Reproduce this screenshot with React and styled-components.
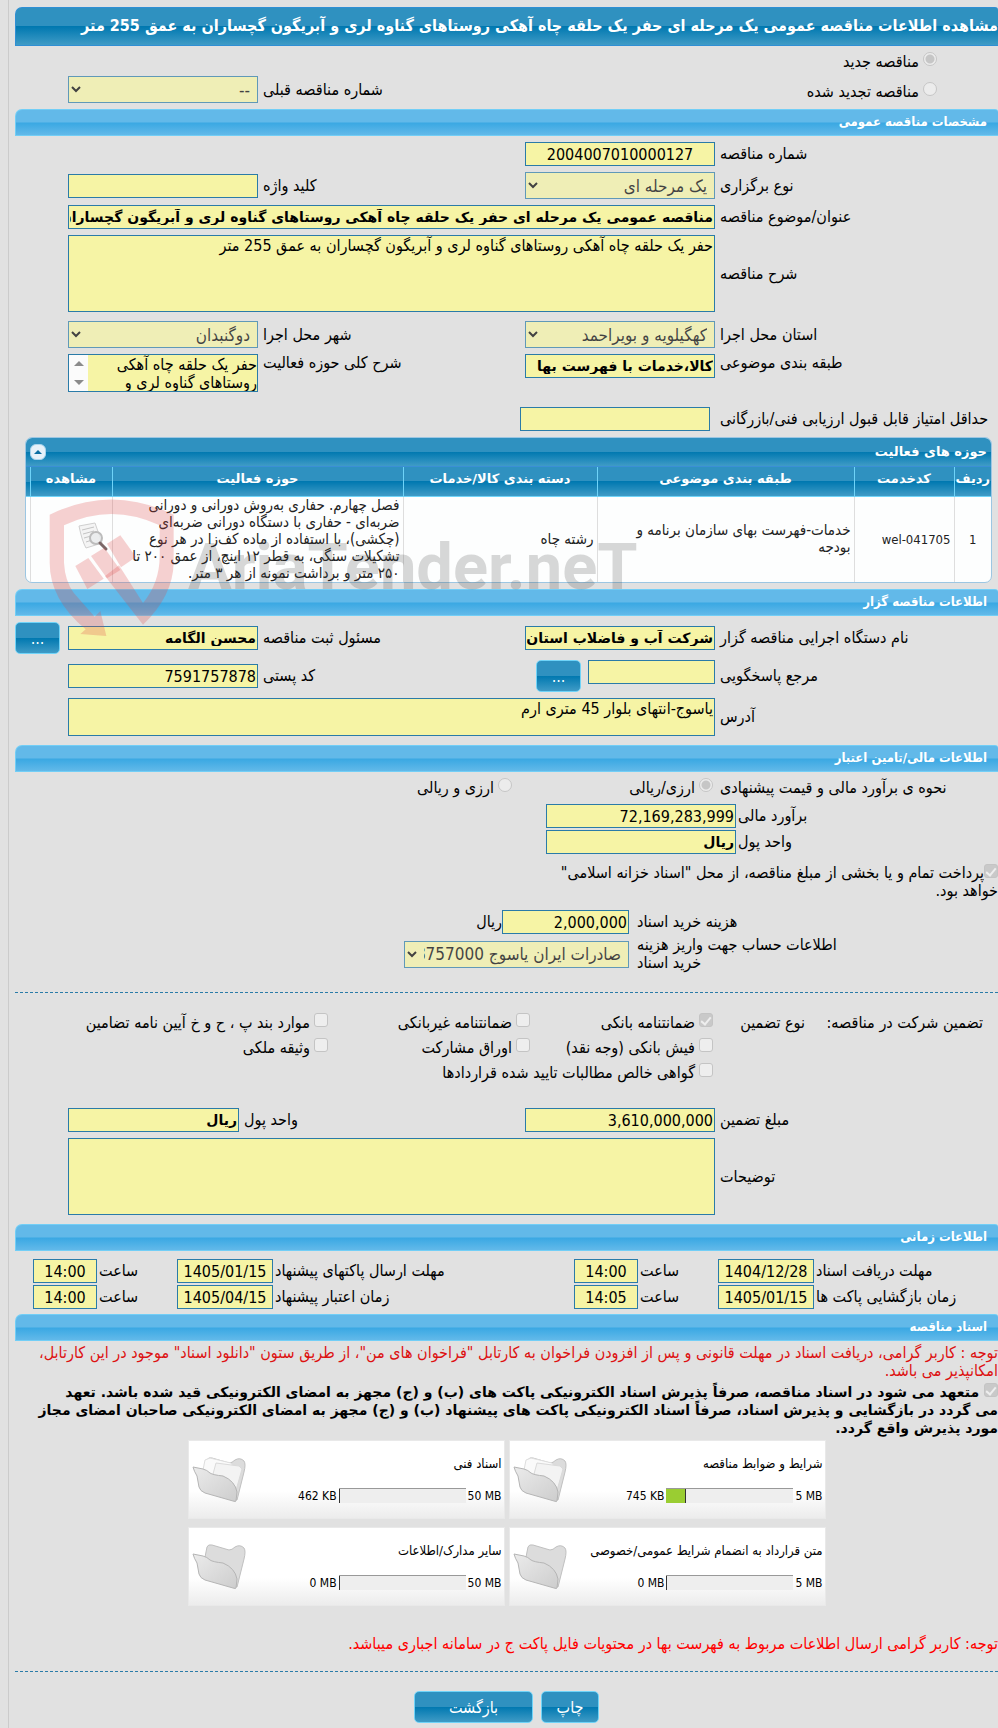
import React from 'react';

import styled, { createGlobalStyle } from 'styled-components';

const TENDER_SUBJECT =
  'حفر یک حلقه چاه آهکی روستاهای گناوه لری و آبریگون گچساران به عمق 255 متر';

const documents = [
  { title: 'شرایط و ضوابط مناقصه', limit: '5 MB', used: '745 KB', percent: 15, filled: true },
  { title: 'اسناد فنی', limit: '50 MB', used: '462 KB', percent: 1, filled: true },
  { title: 'متن قرارداد به انضمام شرایط عمومی/خصوصی', limit: '5 MB', used: '0 MB', percent: 0 },
  { title: 'سایر مدارک/اطلاعات', limit: '50 MB', used: '0 MB', percent: 0 },
];

const Watermark = () => (
  <WatermarkWrap aria-hidden='true'>
    <svg width='127' height='142' viewBox='148 200 381 426'>
      <g fill='#e04848' fillOpacity='0.25'>
        <path d='M150 256 Q335 165 522 256 V400 Q520 500 430 586 L316 440 L358 408 L430 521 Q480 460 480 380 V288 Q335 220 193 288 V400 Q196 455 222 490 L285 562 L302 545 L320 620 L242 614 L258 600 Q150 510 150 400 Z' />
        <path d='M227 410 L266 386 L312 448 L263 479 Z' />
        <path d='M274 380 L314 355 L362 422 L322 447 Z' />
        <path d='M322 343 L362 318 L409 383 L364 414 Z' />
      </g>
    </svg>
    <span>AriaTender.neT</span>
  </WatermarkWrap>
);

const FolderIcon = ({ filled }) => (
  <svg width='54' height='47' viewBox='7 17 54 47' aria-hidden='true'>
    <defs>
      <linearGradient id='folderFront' x1='0' y1='0' x2='1' y2='1'>
        <stop offset='0' stopColor='#ebebeb' />
        <stop offset='1' stopColor='#cdcdcd' />
      </linearGradient>
    </defs>
    <path
      d='M20 31 L22 21 Q23 18 27 19 L44 24 Q47 24 50 21 Q55 18 59 22 Q61 25 59 33 L52 61 L24 45 Z'
      fill='#dcdcdc'
      stroke='#c0c0c0'
    />
    {filled && (
      <>
        <path d='M18 31 L20 21 L25 19 L46 24 L50 30 L46 50 L24 40 Z' fill='#fafafa' stroke='#dedede' />
        <path d='M28 35 L31 24 L54 27 L57 30 L50 55 L38 42 Z' fill='#f3f3f3' stroke='#dadada' />
      </>
    )}
    <path
      d='M8 28 L18 30 Q22 31 25 34 Q28 36 38 37 Q50 42 52 53 L51 62 Q51 63 48 62 L20 54 Q15 52 14 48 L12 37 Q9 32 8 28 Z'
      fill='url(#folderFront)'
      stroke='#b5b5b5'
    />
  </svg>
);

const ViewIcon = () => (
  <svg width='32' height='32' viewBox='0 0 32 32' aria-hidden='true'>
    <path d='M2 5 L18 2 L25 22 L9 27 Q5 20 2 5 Z' fill='#f4f4f4' stroke='#cfcfcf' />
    <path
      d='M5 9 L17 6 M6 13 L17 10 M7 17 L14 15 M9 21 L15 19'
      stroke='#c4c4c4'
      fill='none'
    />
    <circle cx='19' cy='17' r='6' fill='#e8ebec' fillOpacity='0.8' stroke='#bcbcbc' strokeWidth='2' />
    <path d='M23 22 L29 28' stroke='#7c6868' strokeWidth='3' strokeLinecap='round' />
  </svg>
);

const DateRow = ({ items }) => (
  <DateGrid>
    {items.map(({ id, label, date, time }) => (
      <React.Fragment key={id}>
        <Label htmlFor={`${id}-date`}>{label}</Label>
        <Field id={`${id}-date`} dir='ltr' $center readOnly value={date} />
        <Label htmlFor={`${id}-time`}>ساعت</Label>
        <Field id={`${id}-time`} dir='ltr' $center readOnly value={time} />
      </React.Fragment>
    ))}
  </DateGrid>
);

const Check = ({ children, ...rest }) => (
  <Option>
    <CheckBox type='checkbox' disabled {...rest} />
    {children}
  </Option>
);

const App = () => {
  return (
    <>
      <GlobalStyle />
      <Page dir='rtl'>
        <TitleBar>مشاهده اطلاعات مناقصه عمومی یک مرحله ای {TENDER_SUBJECT}</TitleBar>

        <Kinds>
          <FormRow>
            <KindOption>
              <Radio type='radio' name='kind' disabled defaultChecked />
              مناقصه جدید
            </KindOption>
          </FormRow>
          <FormRow>
            <KindOption>
              <Radio type='radio' name='kind' disabled />
              مناقصه تجدید شده
            </KindOption>
            <Label htmlFor='previous'>شماره مناقصه قبلی</Label>
            <Select id='previous' disabled>
              <option>--</option>
            </Select>
          </FormRow>
        </Kinds>

        <SectionBar>مشخصات مناقصه عمومی</SectionBar>
        <Section>
          <FormRow>
            <Label htmlFor='number'>شماره مناقصه</Label>
            <Field id='number' dir='ltr' $center readOnly value='2004007010000127' />
          </FormRow>
          <FormRow>
            <Label htmlFor='type'>نوع برگزاری</Label>
            <Select id='type' disabled>
              <option>یک مرحله ای</option>
            </Select>
            <Label htmlFor='keyword'>کلید واژه</Label>
            <Field id='keyword' readOnly value='' />
          </FormRow>
          <FormRow>
            <Label htmlFor='subject'>عنوان/موضوع مناقصه</Label>
            <BoldField
              id='subject'
              $wide
              readOnly
              value={`مناقصه عمومی یک مرحله ای ${TENDER_SUBJECT}`}
            />
          </FormRow>
          <FormRow>
            <Label htmlFor='description'>شرح مناقصه</Label>
            <TextArea id='description' $wide $height={77} readOnly value={TENDER_SUBJECT} />
          </FormRow>
          <FormRow $top={3}>
            <Label htmlFor='province'>استان محل اجرا</Label>
            <Select id='province' disabled>
              <option>کهگیلویه و بویراحمد</option>
            </Select>
            <Label htmlFor='city'>شهر محل اجرا</Label>
            <Select id='city' disabled>
              <option>دوگنبدان</option>
            </Select>
          </FormRow>
          <FormRow $align='start'>
            <Label htmlFor='category'>طبقه بندی موضوعی</Label>
            <BoldField id='category' readOnly value='کالا،خدمات با فهرست بها' />
            <Label htmlFor='scope'>شرح کلی حوزه فعالیت</Label>
            <ScrollBox>
              <textarea id='scope' readOnly value={TENDER_SUBJECT} />
              <ScrollTrack>
                <svg width='10' height='5' viewBox='0 0 10 5'>
                  <path d='M0 5 L5 0 L10 5 Z' fill='#8b8b8b' />
                </svg>
                <svg width='10' height='5' viewBox='0 0 10 5'>
                  <path d='M0 0 L5 5 L10 0 Z' fill='#8b8b8b' />
                </svg>
              </ScrollTrack>
            </ScrollBox>
          </FormRow>
          <Line $label={278} $gap={10} $top={9}>
            <Label htmlFor='score'>حداقل امتیاز قابل قبول ارزیابی فنی/بازرگانی</Label>
            <Field id='score' $width={190} readOnly value='' />
          </Line>
        </Section>

        <ActivityWrap>
          <ActivityPanel>
            <ActivityTitle>
              حوزه های فعالیت
              <CollapseButton type='button' aria-label='بستن'>
                <svg width='8' height='4' viewBox='0 0 8 4'>
                  <path d='M0 4 L4 0 L8 4 Z' fill='#0b6ea3' />
                </svg>
              </CollapseButton>
            </ActivityTitle>
            <ActivityTable>
              <colgroup>
                <col width='37' />
                <col width='100' />
                <col width='257' />
                <col width='194' />
                <col />
                <col width='82' />
                <col width='4' />
              </colgroup>
              <thead>
                <tr>
                  <th>ردیف</th>
                  <th>کدخدمت</th>
                  <th>طبقه بندی موضوعی</th>
                  <th>دسته بندی کالا/خدمات</th>
                  <th>حوزه فعالیت</th>
                  <th>مشاهده</th>
                  <th />
                </tr>
              </thead>
              <tbody>
                <tr>
                  <td className='center code'>1</td>
                  <td className='code'>wel-041705</td>
                  <td>خدمات-فهرست بهای سازمان برنامه و بودجه</td>
                  <td>رشته چاه</td>
                  <td>
                    فصل چهارم. حفاری به‌روش دورانی و دورانی ضربه‌ای - حفاری با دستگاه دورانی
                    ضربه‌ای (چکشی)، با استفاده از ماده کف‌زا در هر نوع تشکیلات سنگی، به قطر ۱۲
                    اینچ، از عمق ۲۰۰ تا ۲۵۰ متر و برداشت نمونه از هر ۳ متر.
                  </td>
                  <td>
                    <ViewIcon />
                  </td>
                  <td />
                </tr>
              </tbody>
            </ActivityTable>
          </ActivityPanel>
          <Watermark />
        </ActivityWrap>

        <SectionBar>اطلاعات مناقصه گزار</SectionBar>
        <Section>
          <FormRow>
            <Label htmlFor='agency'>نام دستگاه اجرایی مناقصه گزار</Label>
            <BoldField id='agency' readOnly value='شرکت آب و فاضلاب استان' />
            <Label htmlFor='registrar'>مسئول ثبت مناقصه</Label>
            <BoldField id='registrar' readOnly value='محسن الگامه' />
            <GlossyButton type='button' $width={45}>
              ...
            </GlossyButton>
          </FormRow>
          <FormRow>
            <Label htmlFor='contact'>مرجع پاسخگویی</Label>
            <WithButton>
              <Field id='contact' readOnly value='' />
              <GlossyButton type='button' $width={45}>
                ...
              </GlossyButton>
            </WithButton>
            <Label htmlFor='postal'>کد پستی</Label>
            <Field id='postal' readOnly value='7591757878' />
          </FormRow>
          <FormRow>
            <Label htmlFor='address'>آدرس</Label>
            <TextArea
              id='address'
              $wide
              $height={38}
              readOnly
              value='یاسوج-انتهای بلوار 45 متری ارم'
            />
          </FormRow>
        </Section>

        <SectionBar $top={3}>اطلاعات مالی/تامین اعتبار</SectionBar>
        <Finance>
          <Line $label={278} $gap={5} $bottom={4}>
            <Label as='span'>نحوه ی برآورد مالی و قیمت پیشنهادی</Label>
            <CurrencyOption>
              <Radio type='radio' name='currency' disabled defaultChecked />
              ارزی/ریالی
            </CurrencyOption>
            <CurrencyOption>
              <Radio type='radio' name='currency' disabled />
              ارزی و ریالی
            </CurrencyOption>
          </Line>
          <Line $label={260} $gap={2}>
            <Label htmlFor='estimate'>برآورد مالی</Label>
            <Field id='estimate' $width={190} readOnly value='72,169,283,999' />
          </Line>
          <Line $label={260} $gap={2}>
            <Label htmlFor='unit'>واحد پول</Label>
            <BoldField id='unit' $width={190} readOnly value='ریال' />
          </Line>
          <Treasury>
            <CheckBox type='checkbox' disabled defaultChecked />
            پرداخت تمام و یا بخشی از مبلغ مناقصه، از محل "اسناد خزانه اسلامی" خواهد بود.
          </Treasury>
          <Line $label={361} $gap={8}>
            <Label htmlFor='cost'>هزینه خرید اسناد</Label>
            <Field id='cost' $width={127} readOnly value='2,000,000' />
            <Unit>ریال</Unit>
          </Line>
          <Line $label={361} $gap={8}>
            <Label htmlFor='account'>
              اطلاعات حساب جهت واریز هزینه
              <br />
              خرید اسناد
            </Label>
            <Select id='account' $width={225} disabled>
              <option>صادرات ایران یاسوج 8757000</option>
            </Select>
          </Line>
        </Finance>

        <Divider $top={14} />

        <GuaranteeGrid>
          <span>تضمین شرکت در مناقصه:</span>
          <span>نوع تضمین</span>
          <Check defaultChecked>ضمانتنامه بانکی</Check>
          <Check>ضمانتنامه غیربانکی</Check>
          <Check>موارد بند پ ، ح و خ آیین نامه تضامین</Check>
          <div className='row-start'>
            <Check>فیش بانکی (وجه نقد)</Check>
          </div>
          <Check>اوراق مشارکت</Check>
          <Check>وثیقه ملکی</Check>
          <div className='row-start wide'>
            <Check>گواهی خالص مطالبات تایید شده قراردادها</Check>
          </div>
        </GuaranteeGrid>
        <Section>
          <FormRow>
            <Label htmlFor='amount'>مبلغ تضمین</Label>
            <Field id='amount' readOnly value='3,610,000,000' />
            <UnitGroup>
              <Label htmlFor='amount-unit'>واحد پول</Label>
              <BoldField id='amount-unit' $width={171} readOnly value='ریال' />
            </UnitGroup>
          </FormRow>
          <FormRow>
            <Label htmlFor='notes'>توضیحات</Label>
            <TextArea id='notes' $wide $height={77} readOnly value='' />
          </FormRow>
        </Section>

        <SectionBar $top={3}>اطلاعات زمانی</SectionBar>
        <Dates>
          <DateRow
            items={[
              { id: 'receive', label: 'مهلت دریافت اسناد', date: '1404/12/28', time: '14:00' },
              { id: 'send', label: 'مهلت ارسال پاکتهای پیشنهاد', date: '1405/01/15', time: '14:00' },
            ]}
          />
          <DateRow
            items={[
              { id: 'open', label: 'زمان بازگشایی پاکت ها', date: '1405/01/15', time: '14:05' },
              { id: 'valid', label: 'زمان اعتبار پیشنهاد', date: '1405/04/15', time: '14:00' },
            ]}
          />
        </Dates>

        <SectionBar $top={5}>اسناد مناقصه</SectionBar>
        <Notice>
          توجه : کاربر گرامی، دریافت اسناد در مهلت قانونی و پس از افزودن فراخوان به کارتابل "فراخوان
          های من"، از طریق ستون "دانلود اسناد" موجود در این کارتابل، امکانپذیر می باشد.
        </Notice>
        <Commitment>
          <CheckBox type='checkbox' disabled defaultChecked /> متعهد می شود در اسناد مناقصه، صرفاً
          پذیرش اسناد الکترونیکی پاکت های (ب) و (ج) مجهز به امضای الکترونیکی قید شده باشد. تعهد
          <br />
          می گردد در بازگشایی و پذیرش اسناد، صرفاً اسناد الکترونیکی پاکت های پیشنهاد (ب) و (ج) مجهز
          به امضای الکترونیکی صاحبان امضای مجاز مورد پذیرش واقع گردد.
        </Commitment>

        <Documents>
          {documents.map((doc) => (
            <DocumentCard key={doc.title}>
              <DocumentInfo>
                <div>{doc.title}</div>
                <Usage>
                  <span dir='ltr'>{doc.limit}</span>
                  <UsageBar>
                    <div style={{ width: `${doc.percent}%` }} />
                  </UsageBar>
                  <span dir='ltr'>{doc.used}</span>
                </Usage>
              </DocumentInfo>
              <FolderIcon filled={doc.filled} />
            </DocumentCard>
          ))}
        </Documents>

        <Warning>
          توجه: کاربر گرامی ارسال اطلاعات مربوط به فهرست بها در محتویات فایل پاکت ج در سامانه اجباری
          میباشد.
        </Warning>
        <Divider />
        <Actions>
          <GlossyButton type='button' $width={58}>
            چاپ
          </GlossyButton>
          <GlossyButton type='button' $width={119}>
            بازگشت
          </GlossyButton>
        </Actions>
      </Page>
    </>
  );
};

export default App;

const GlobalStyle = createGlobalStyle`
  * {
    box-sizing: border-box;
  }

  body {
    margin: 0;
    background: #e1e1e1;
    overflow-x: hidden;
  }

  body, input, textarea, select, button {
    font-family: 'DejaVu Sans Condensed', 'DejaVu Sans', sans-serif;
  }
`;

const Page = styled.main`
  margin-left: 8px;
  padding: 7px 0 6px 6px;
  border-left: 1px solid #cbcbcb;
  color: #000;
  font-size: 16px;
  line-height: 18px;
`;

const TitleBar = styled.h1`
  height: 39px;
  margin: 0;
  border: 1px solid #2f8fd4;
  border-right: 0;
  border-radius: 7px 3px 0 0;
  background: linear-gradient(#2f91c0 50%, #0078b0 50%, #3f9bc6);
  color: #fff;
  font-size: 16px;
  line-height: 36px;
  white-space: nowrap;
  overflow: hidden;
`;

const SectionBar = styled.h2`
  height: 27px;
  margin: ${(props) => props.$top || 0}px 0 0;
  padding-right: 11px;
  border: 1px solid #72cef6;
  border-right: 0;
  border-radius: 7px 3px 0 0;
  background: linear-gradient(#62b9e9 48%, #3aa8e3 52%, #62b9e9);
  color: #fff;
  font-size: 13px;
  line-height: 24px;
`;

const Section = styled.section`
  display: flex;
  flex-direction: column;
  gap: 6px;
  padding: 6px 0;
`;

const Kinds = styled(Section)`
  gap: 3px;
  padding-top: 1px;
`;

/* label / field / label / field / side button */
const FormRow = styled.div`
  display: grid;
  grid-template-columns: 278px 190px 1fr 190px 48px;
  column-gap: 5px;
  align-items: ${(props) => props.$align || 'center'};
  margin-top: ${(props) => props.$top || 0}px;

  > button {
    justify-self: end;
  }
`;

const Label = styled.label`
  text-align: left;
`;

const Field = styled.input`
  width: ${(props) => (props.$width ? `${props.$width}px` : '100%')};
  min-width: 0;
  height: 24px;
  padding: 0 1px;
  border: 1px solid #2a7ba8;
  border-radius: 0;
  background: #f6f4a5;
  color: #000;
  font-size: 16px;
  text-align: ${(props) => (props.$center ? 'center' : 'right')};
  grid-column: ${(props) => (props.$wide ? '2 / 5' : 'auto')};
  outline: none;
`;

const BoldField = styled(Field)`
  font-family: 'DejaVu Sans', sans-serif;
  font-size: 14px;
  font-weight: bold;
`;

const TextArea = styled.textarea`
  display: block;
  width: 100%;
  height: ${(props) => props.$height}px;
  padding: 1px;
  border: 1px solid #2a7ba8;
  background: #f6f4a5;
  color: #000;
  font-size: 16px;
  line-height: 18px;
  resize: none;
  overflow: hidden;
  grid-column: ${(props) => (props.$wide ? '2 / 5' : 'auto')};
  outline: none;
`;

const Select = styled.select`
  width: ${(props) => (props.$width ? `${props.$width}px` : '100%')};
  height: 27px;
  padding: 0 3px;
  border: 1px solid #2a7ba8;
  border-radius: 0;
  background-color: #f6f4a5;
  color: #000;
  font-size: 17px;
  opacity: 0.7;
`;

const ScrollBox = styled.div`
  display: flex;
  height: 38px;
  border: 1px solid #2a7ba8;
  background: #f6f4a5;

  textarea {
    flex: 1;
    min-width: 0;
    padding: 1px 0 0;
    border: 0;
    background: none;
    color: #000;
    font-size: 16px;
    line-height: 18px;
    resize: none;
    overflow: hidden;
    outline: none;
  }
`;

const ScrollTrack = styled.div`
  display: flex;
  flex-direction: column;
  align-items: center;
  justify-content: space-between;
  width: 19px;
  padding: 6px 0;
  background: #fbfbfb;
`;

const Option = styled.label`
  display: flex;
  align-items: center;
  gap: 4px;
  white-space: nowrap;

  input {
    margin-bottom: 6px;
  }
`;

const KindOption = styled(Option)`
  grid-column: 1 / 3;
  height: 26px;
  padding: 4px 61px 0 0;
`;

const CurrencyOption = styled(Option)`
  width: 196px;
  padding-right: 2px;
`;

const Radio = styled.input`
  flex: none;
  appearance: none;
  width: 14px;
  height: 14px;
  margin: 0;
  border: 1px solid #c6c6c6;
  border-radius: 50%;
  background: #ececec;

  &:checked {
    background: radial-gradient(#c6c6c6 4px, #ececec 5px);
  }
`;

const CheckBox = styled.input`
  flex: none;
  appearance: none;
  width: 14px;
  height: 14px;
  margin: 0;
  border: 1px solid #c4c4c4;
  border-radius: 3px;
  background: #eee;

  &:checked {
    background: #c9c9c9;
  }

  &:checked::before {
    content: '';
    display: block;
    width: 4px;
    height: 8px;
    margin: 1px auto 0;
    border: solid #eee;
    border-width: 0 2px 2px 0;
    transform: rotate(40deg);
  }
`;

const ActivityWrap = styled.div`
  position: relative;
  margin: 0 6px 6px 10px;
`;

const ActivityPanel = styled.div`
  border: 1px solid #9cc6e2;
  border-radius: 7px;
  background: #fdfefe;
  overflow: hidden;
`;

const ActivityTitle = styled.div`
  display: flex;
  align-items: center;
  justify-content: space-between;
  height: 29px;
  padding: 0 4px;
  border-bottom: 1px solid #3a8fd6;
  background: linear-gradient(#2f91c0 50%, #0078b0 50%, #3f9bc6);
  color: #fff;
  font-family: 'DejaVu Sans', sans-serif;
  font-size: 13px;
  font-weight: bold;
`;

const CollapseButton = styled.button`
  display: flex;
  align-items: center;
  justify-content: center;
  width: 16px;
  height: 16px;
  padding: 0;
  border: 1px solid #a9d4ec;
  border-radius: 6px;
  background: #e6f1f9;
`;

const ActivityTable = styled.table`
  width: 100%;
  border-collapse: collapse;
  table-layout: fixed;
  font-size: 15px;
  line-height: 17px;

  th {
    height: 29px;
    padding: 0 0 4px;
    border-left: 1px solid #6fd3f8;
    border-bottom: 1px solid #6fd3f8;
    background: linear-gradient(#2f91c0 50%, #0078b0 50%, #3f9bc6);
    color: #fff;
    font-family: 'DejaVu Sans', sans-serif;
    font-size: 13px;
    line-height: 22px;
    white-space: nowrap;
  }

  td {
    height: 86px;
    padding: 0 3px 0 10px;
    border-left: 1px solid #dedede;
    color: #222;
  }

  th:last-child,
  td:last-child {
    border-left: 0;
    padding: 0;
  }

  .code {
    font-size: 13px;
  }

  .center {
    padding: 0;
    text-align: center;
  }
`;

const WatermarkWrap = styled.div`
  position: absolute;
  left: 24px;
  top: 59px;
  display: flex;
  direction: ltr;
  align-items: center;
  gap: 12px;
  pointer-events: none;

  span {
    color: rgba(60, 60, 60, 0.2);
    font-family: Roboto, 'Liberation Sans', sans-serif;
    font-size: 65px;
    font-weight: bold;
    line-height: 86px;
  }
`;

const GlossyButton = styled.button`
  flex: none;
  width: ${(props) => props.$width}px;
  height: 32px;
  padding: 0;
  border: 1px solid #6fd3f8;
  border-radius: 5px;
  background: linear-gradient(#2f91c0 50%, #0078b0 50%, #3f9bc6);
  color: #fff;
  font-size: 16px;
`;

const WithButton = styled.div`
  display: flex;
  gap: 7px;

  input {
    flex: 0 0 127px;
  }
`;

const Finance = styled(Section)`
  gap: 2px;
`;

const Line = styled.div`
  display: flex;
  align-items: center;
  gap: ${(props) => props.$gap}px;
  margin-top: ${(props) => props.$top || 0}px;
  margin-bottom: ${(props) => props.$bottom || 0}px;

  > :first-child {
    flex: 0 0 ${(props) => props.$label}px;
  }
`;

const Unit = styled.span`
  margin-right: -8px;
`;

const UnitGroup = styled.div`
  grid-column: 3 / 5;
  display: flex;
  align-items: center;
  justify-content: flex-end;
  gap: 5px;
`;

const Treasury = styled.label`
  display: block;
  max-width: 458px;
  padding: 8px 0;
`;

const Divider = styled.hr`
  margin: ${(props) => props.$top || 0}px 0 0;
  border: 0;
  border-top: 1px dashed #2a7ba8;
`;

const GuaranteeGrid = styled.div`
  display: grid;
  grid-template-columns: 178px 92px 183px 202px 1fr;
  grid-auto-rows: 25px;
  align-items: center;
  padding: 17px 15px;

  .row-start {
    grid-column: 3;
  }

  .wide {
    grid-column: 3 / 6;
  }
`;

const Dates = styled(Section)`
  gap: 2px;
  padding: 8px 0 0;
`;

const DateGrid = styled.div`
  display: grid;
  grid-template-columns: 182px 96px 76px 64px 1fr 96px 76px 64px 16px;
  column-gap: 2px;
  align-items: center;
`;

const Notice = styled.p`
  margin: 3px 0;
  color: #d11;
`;

const Commitment = styled.label`
  display: block;
  font-family: 'DejaVu Sans', sans-serif;
  font-size: 14px;
  font-weight: bold;
`;

const Documents = styled.section`
  display: grid;
  grid-template-columns: 317px 317px;
  justify-content: center;
  gap: 8px 4px;
  margin-top: 3px;
`;

const DocumentCard = styled.article`
  display: flex;
  align-items: center;
  justify-content: space-between;
  height: 79px;
  padding: 0 2px 0 3px;
  border: 1px solid #e9e9e9;
  background: linear-gradient(#fff 65%, #ececec);
  font-size: 13px;
`;

const DocumentInfo = styled.div`
  display: flex;
  flex-direction: column;
  gap: 14px;
  white-space: nowrap;
`;

const Usage = styled.div`
  display: flex;
  align-items: center;
  gap: 2px;
  font-size: 12px;
`;

const UsageBar = styled.div`
  width: 127px;
  height: 15px;
  border-top: 1px solid #999;
  background: #eee;
  direction: ltr;

  div {
    height: 100%;
    border-right: 1px solid #333;
    background: #9acd32;
  }
`;

const Warning = styled.p`
  margin: 29px 0 18px;
  color: #f00;
`;

const Actions = styled.div`
  display: flex;
  justify-content: center;
  gap: 8px;
  padding-top: 19px;
`;
